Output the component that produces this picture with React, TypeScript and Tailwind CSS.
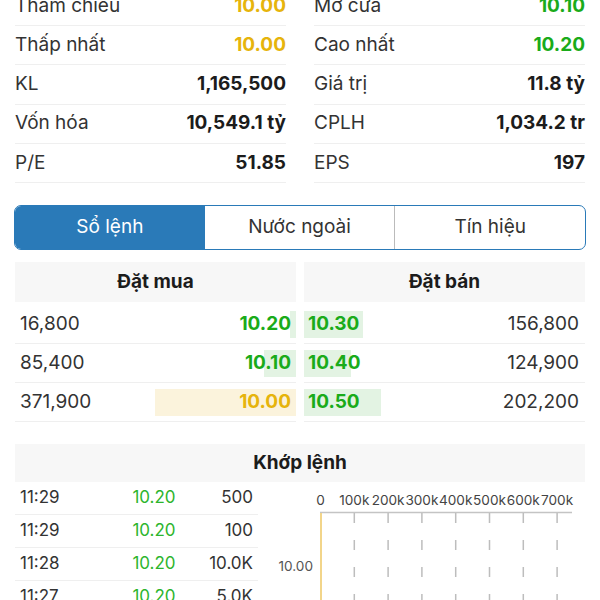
import React from "react";

const YELLOW = "text-[#e6b40c]";
const GREEN = "text-[#1aab1a]";

type Stat = { label: string; value: string; color?: string };

const leftStats: Stat[] = [
  { label: "Tham chiếu", value: "10.00", color: YELLOW },
  { label: "Thấp nhất", value: "10.00", color: YELLOW },
  { label: "KL", value: "1,165,500" },
  { label: "Vốn hóa", value: "10,549.1 tỷ" },
  { label: "P/E", value: "51.85" },
];
const rightStats: Stat[] = [
  { label: "Mở cửa", value: "10.10", color: GREEN },
  { label: "Cao nhất", value: "10.20", color: GREEN },
  { label: "Giá trị", value: "11.8 tỷ" },
  { label: "CPLH", value: "1,034.2 tr" },
  { label: "EPS", value: "197" },
];

function StatCol({ items }: { items: Stat[] }) {
  return (
    <div className="flex flex-col">
      {items.map((s) => (
        <div
          key={s.label}
          className="h-[39.2px] flex items-center justify-between border-b border-[#efefef]"
        >
          <span className="text-[19px] text-[#333]">{s.label}</span>
          <span className={`text-[19px] font-bold ${s.color ?? "text-[#1c1c1c]"}`}>
            {s.value}
          </span>
        </div>
      ))}
    </div>
  );
}

const buys = [
  { q: "16,800", p: "10.20", w: 6, yellow: false },
  { q: "85,400", p: "10.10", w: 32, yellow: false },
  { q: "371,900", p: "10.00", w: 141, yellow: true },
];
const sells = [
  { q: "156,800", p: "10.30", w: 59 },
  { q: "124,900", p: "10.40", w: 47 },
  { q: "202,200", p: "10.50", w: 77 },
];

const trades = [
  ["11:29", "10.20", "500"],
  ["11:29", "10.20", "100"],
  ["11:28", "10.20", "10.0K"],
  ["11:27", "10.20", "5.0K"],
];

function Chart() {
  const labels = ["0", "100k", "200k", "300k", "400k", "500k", "600k", "700k"];
  const x0 = 62.5;
  const step = 33.8;
  return (
    <svg width="327" height="118" className="block">
      {labels.map((l, i) => (
        <text
          key={l}
          x={x0 + i * step}
          y={18}
          textAnchor="middle"
          dominantBaseline="central"
          fontSize="13.6"
          fill="#444"
          fontFamily="Inter, sans-serif"
        >
          {l}
        </text>
      ))}
      <line x1={62} y1={30.5} x2={314} y2={30.5} stroke="#c4c4c4" strokeWidth="1.5" />
      {labels.slice(1).map((l, i) => (
        <line
          key={l}
          x1={x0 + (i + 1) * step}
          y1={31}
          x2={x0 + (i + 1) * step}
          y2={118}
          stroke="#bdbdbd"
          strokeWidth="1.5"
          strokeDasharray="10 17"
        />
      ))}
      <rect x={62} y={31} width={2} height={90} fill="#f2d58a" />
      <text
        x={55}
        y={84}
        textAnchor="end"
        dominantBaseline="central"
        fontSize="13.6"
        fill="#555"
        fontFamily="Inter, sans-serif"
      >
        10.00
      </text>
    </svg>
  );
}

export default function App() {
  return (
    <div className="w-[600px] h-[600px] overflow-hidden bg-white font-['Inter',sans-serif]">
      <div className="mt-[-13px] px-[15px] grid grid-cols-2 gap-x-[28px]">
        <StatCol items={leftStats} />
        <StatCol items={rightStats} />
      </div>

      <div className="mt-[22px] mx-[14px] h-[45px] flex border border-[#2a7ab8] rounded-[7px] overflow-hidden text-[19px]">
        <div className="flex-1 flex items-center justify-center bg-[#2a7ab8] text-white">Sổ lệnh</div>
        <div className="flex-1 flex items-center justify-center text-[#333]">Nước ngoài</div>
        <div className="flex-1 flex items-center justify-center text-[#333] border-l border-[#bbb]">Tín hiệu</div>
      </div>

      <div className="mt-[12px] px-[15px] grid grid-cols-2 gap-x-[8px]">
        <div>
          <div className="h-[40px] bg-[#f7f7f7] flex items-center justify-center text-[19px] font-bold text-[#1c1c1c]">
            Đặt mua
          </div>
          <div className="pt-[3px]">
            {buys.map((r) => (
              <div key={r.q} className="relative h-[39px] border-b border-[#efefef] flex items-center justify-between pl-[5px] pr-[5px]">
                <div
                  className={`absolute right-0 top-[6px] bottom-[5px] ${r.yellow ? "bg-[#fbf3dc]" : "bg-[#e3f3e3]"}`}
                  style={{ width: r.w }}
                />
                <span className="relative text-[19px] text-[#333]">{r.q}</span>
                <span className={`relative text-[19px] font-bold ${r.yellow ? YELLOW : GREEN}`}>{r.p}</span>
              </div>
            ))}
          </div>
        </div>
        <div>
          <div className="h-[40px] bg-[#f7f7f7] flex items-center justify-center text-[19px] font-bold text-[#1c1c1c]">
            Đặt bán
          </div>
          <div className="pt-[3px]">
            {sells.map((r) => (
              <div key={r.q} className="relative h-[39px] border-b border-[#efefef] flex items-center justify-between pl-[4px] pr-[6px]">
                <div className="absolute left-0 top-[6px] bottom-[5px] bg-[#e3f3e3]" style={{ width: r.w }} />
                <span className={`relative text-[19px] font-bold ${GREEN}`}>{r.p}</span>
                <span className="relative text-[19px] text-[#333]">{r.q}</span>
              </div>
            ))}
          </div>
        </div>
      </div>

      <div className="mt-[22px] mx-[15px] h-[38px] bg-[#f7f7f7] flex items-center justify-center text-[19px] font-bold text-[#1c1c1c]">
        Khớp lệnh
      </div>
      <div className="flex pl-[15px]">
        <div className="w-[243px] flex flex-col">
          {trades.map((t, i) => (
            <div key={i} className="h-[33px] border-b border-[#efefef] flex items-center text-[17px]">
              <span className="w-[100px] pl-[5px] text-[#333]">{t[0]}</span>
              <span className="w-[78px] text-center text-[#2db52d]">{t[1]}</span>
              <span className="flex-1 text-right pr-[5px] text-[#333]">{t[2]}</span>
            </div>
          ))}
        </div>
        <Chart />
      </div>
    </div>
  );
}
